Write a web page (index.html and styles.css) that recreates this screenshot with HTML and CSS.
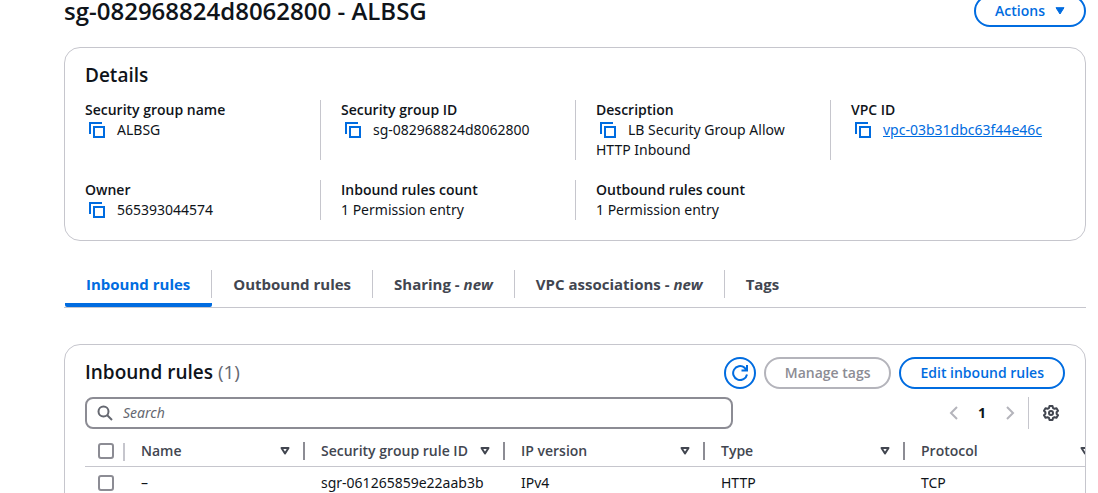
FILE: index.html
```html
<!DOCTYPE html>
<html lang="en">
<head>
<meta charset="utf-8">
<title>sg-082968824d8062800 - ALBSG</title>
<link rel="stylesheet" href="styles.css">
</head>
<body>
<svg class="sprite" aria-hidden="true">
  <symbol id="copy" viewBox="0 0 16 16"><path d="M1 12V1h12M5 5h10v10H5z" fill="none" stroke="currentColor" stroke-width="2"/></symbol>
  <symbol id="sort" viewBox="0 0 10 8"><path d="M1.5 1h7L5 6.500z" fill="none" stroke="currentColor" stroke-width="2" stroke-linejoin="round"/></symbol>
</svg>
<main class="page">
  <header class="page-header">
    <h1 class="page-title">sg-082968824d8062800 - ALBSG</h1>
    <button class="button" type="button">Actions
      <svg class="caret" viewBox="0 0 10 8" aria-hidden="true"><path d="M1 .7h8L5 7z" fill="currentColor" stroke="currentColor" stroke-linejoin="round"/></svg>
    </button>
  </header>

  <section class="card details">
    <h2 class="card-title">Details</h2>
    <dl class="fields">
      <div class="field"><dt>Security group name</dt><dd><button class="copy" type="button" aria-label="Copy name"><svg><use href="#copy"/></svg></button>ALBSG</dd></div>
      <div class="field"><dt>Security group ID</dt><dd><button class="copy" type="button" aria-label="Copy ID"><svg><use href="#copy"/></svg></button>sg-082968824d8062800</dd></div>
      <div class="field"><dt>Description</dt><dd><button class="copy" type="button" aria-label="Copy description"><svg><use href="#copy"/></svg></button>LB Security Group Allow HTTP Inbound</dd></div>
      <div class="field"><dt>VPC ID</dt><dd><button class="copy" type="button" aria-label="Copy VPC ID"><svg><use href="#copy"/></svg></button><a href="#vpc">vpc-03b31dbc63f44e46c</a></dd></div>
      <div class="field"><dt>Owner</dt><dd><button class="copy" type="button" aria-label="Copy owner"><svg><use href="#copy"/></svg></button>565393044574</dd></div>
      <div class="field"><dt>Inbound rules count</dt><dd>1 Permission entry</dd></div>
      <div class="field"><dt>Outbound rules count</dt><dd>1 Permission entry</dd></div>
    </dl>
  </section>

  <div class="tabs" role="tablist">
    <button class="tab tab-active" type="button" role="tab" aria-selected="true"><span>Inbound rules</span></button>
    <button class="tab" type="button" role="tab"><span>Outbound rules</span></button>
    <button class="tab" type="button" role="tab"><span>Sharing - <em>new</em></span></button>
    <button class="tab" type="button" role="tab"><span>VPC associations - <em>new</em></span></button>
    <button class="tab" type="button" role="tab"><span>Tags</span></button>
  </div>

  <section class="card rules">
    <div class="rules-header">
      <h2 class="card-title">Inbound rules <span class="count">(1)</span></h2>
      <div class="actions">
        <button class="button button-round" type="button" aria-label="Refresh">
          <svg viewBox="0 0 16 16" aria-hidden="true"><path d="M15 9.500A7 7 0 1 1 12.500 2.600L14.500 5M15 0v5.500H9.500" fill="none" stroke="currentColor" stroke-width="2"/></svg>
        </button>
        <button class="button" type="button" disabled>Manage tags</button>
        <button class="button" type="button">Edit inbound rules</button>
      </div>
    </div>
    <div class="toolbar">
      <label class="search">
        <svg viewBox="0 0 16 16" aria-hidden="true"><circle cx="6.5" cy="6.5" r="5" fill="none" stroke="currentColor" stroke-width="2"/><path d="M10 10l5 5" stroke="currentColor" stroke-width="2"/></svg>
        <input type="search" placeholder="Search" aria-label="Search rules">
      </label>
      <div class="paging">
        <nav class="pages" aria-label="Pages">
          <button class="page-button arrow" type="button" disabled aria-label="Previous page"><svg viewBox="0 0 16 16"><path d="M11 2L5 8l6 6" fill="none" stroke="currentColor" stroke-width="2"/></svg></button>
          <button class="page-button current" type="button">1</button>
          <button class="page-button arrow" type="button" disabled aria-label="Next page"><svg viewBox="0 0 16 16"><path d="M5 2l6 6-6 6" fill="none" stroke="currentColor" stroke-width="2"/></svg></button>
        </nav>
        <button class="settings" type="button" aria-label="Preferences">
          <svg viewBox="0 0 16 16" aria-hidden="true"><path d="M6.500 1h3l.5 2 1.500.8 2-.6L15 5.700 13.600 7.200v1.600L15 10.300l-1.500 2.500-2-.6-1.500.8-.5 2h-3L6 13l-1.500-.8-2 .6L1 10.300l1.400-1.500V7.200L1 5.700l1.500-2.500 2 .6L6 3z" fill="none" stroke="currentColor" stroke-width="2" stroke-linejoin="round"/><circle cx="8" cy="8" r="2" fill="none" stroke="currentColor" stroke-width="2"/></svg>
        </button>
      </div>
    </div>
    <div class="table-scroll">
      <table class="table">
        <colgroup><col class="col-select"><col class="col-name"><col><col><col><col></colgroup>
        <thead>
          <tr>
            <th><input type="checkbox" aria-label="Select all rules"></th>
            <th><div class="heading">Name<svg><use href="#sort"/></svg></div></th>
            <th><div class="heading">Security group rule ID<svg><use href="#sort"/></svg></div></th>
            <th><div class="heading">IP version<svg><use href="#sort"/></svg></div></th>
            <th><div class="heading">Type<svg><use href="#sort"/></svg></div></th>
            <th><div class="heading">Protocol<svg><use href="#sort"/></svg></div></th>
          </tr>
        </thead>
        <tbody>
          <tr>
            <td><input type="checkbox" aria-label="Select rule"></td>
            <td>–</td>
            <td>sgr-061265859e22aab3b</td>
            <td>IPv4</td>
            <td>HTTP</td>
            <td>TCP</td>
          </tr>
        </tbody>
      </table>
    </div>
  </section>
</main>
</body>
</html>
```
FILE: styles.css
```css
* { box-sizing: border-box; }

body {
  margin: 0;
  height: 100vh;
  overflow: hidden;
  background: #fff;
  color: #0f141a;
  font: 14px/20px "Noto Sans", "Open Sans", sans-serif;
}

button, input { font: inherit; color: inherit; }
button { padding: 0; border: 0; background: none; }
h1, h2, dl, dd { margin: 0; }
h1, h2, dt, th, .button, .tab { font-family: "Open Sans", "Noto Sans", sans-serif; }

.sprite { position: absolute; width: 0; height: 0; }

.page { padding: 0 12px 0 64px; }

.page-header {
  display: flex;
  justify-content: space-between;
  align-items: center;
  margin: -5px 0 20px;
}
.page-title { font-size: 24px; line-height: 30px; font-weight: 600; }

.button {
  display: flex;
  align-items: center;
  justify-content: center;
  gap: 10px;
  height: 32px;
  padding: 0 19px;
  border: 2px solid #006ce0;
  border-radius: 20px;
  color: #006ce0;
  font-weight: 600;
  white-space: nowrap;
}
.button:disabled { border-color: #b4b4bb; color: #8c8c94; }
.button-round { width: 32px; padding: 0; }
.button-round svg { width: 16px; height: 16px; }
.caret { width: 10px; height: 8px; }

.card { border: 1px solid #c6c6cd; border-radius: 16px; }
.card-title { font-size: 19px; line-height: 24px; font-weight: 600; }

.details { padding: 15px 0 20px; }
.details .card-title { padding: 0 20px; }

.fields {
  display: grid;
  grid-template-columns: repeat(4, 1fr);
  row-gap: 20px;
  margin-top: 13px;
}
.field { padding: 0 20px; border-left: 1px solid #c6c6cd; }
.field:nth-child(4n + 1) { border-left-color: transparent; padding-left: 19px; }
.field dt { font-weight: 600; }

.copy { width: 16px; height: 16px; margin: 0 12px 0 4px; vertical-align: -3px; color: #006ce0; }
.copy svg { display: block; width: 16px; height: 16px; }
.field a { color: #006ce0; }

.tabs {
  display: flex;
  margin-top: 25px;
  border-bottom: 1px solid #c6c6cd;
}
.tab {
  padding: 4px 0 5px;
  border-bottom: 4px solid transparent;
  color: #424650;
  font-size: 15px;
  font-weight: 700;
}
.tab span { display: block; padding: 4px 21px; border-right: 1px solid #c6c6cd; }
.tab:last-child span { border-right: 0; }
.tab-active {
  margin-left: 1px;
  border-radius: 2px;
  color: #006ce0;
  background: linear-gradient(#006ce0, #006ce0) bottom / 100% 4px no-repeat border-box;
}

.rules { margin-top: 36px; padding: 12px 0 20px; }
.rules-header, .toolbar {
  display: flex;
  justify-content: space-between;
  align-items: center;
  padding: 0 20px;
}
.rules-header { align-items: flex-start; }
.rules-header .card-title { padding-top: 3px; }
.count { color: #656871; font-weight: 400; }
.actions { display: flex; gap: 8px; }

.toolbar { margin-top: 8px; }
.search {
  display: flex;
  align-items: center;
  flex: 0 1 648px;
  gap: 10px;
  height: 32px;
  padding: 0 10px;
  border: 2px solid #8c8c94;
  border-radius: 8px;
  color: #656871;
}
.search svg { width: 16px; height: 16px; }
.search input { flex: 1; min-width: 0; padding: 0; border: 0; outline: 0; background: none; }
.search input::placeholder { color: #656871; font-style: italic; opacity: 1; }

.paging, .pages { display: flex; align-items: center; }
.page-button { display: flex; justify-content: center; align-items: center; width: 28px; height: 32px; }
.page-button svg { width: 16px; height: 16px; }
.arrow { color: #b4b4bb; }
.current { font-weight: 700; }
.settings { display: flex; align-items: center; height: 32px; margin-left: 4px; padding: 0 6px 0 14px; border-left: 1px solid #c6c6cd; color: #424650; }
.settings svg { width: 16px; height: 16px; }

.table-scroll { margin: 8px 0 0 20px; overflow: hidden; }
.table { width: 1020px; table-layout: fixed; border-collapse: collapse; }
.col-select { width: 40px; }
.col-name { width: 180px; }
.table th, .table td { padding: 0 0 0 16px; text-align: left; white-space: nowrap; }
.table th:first-child, .table td:first-child { padding-left: 13px; }
.table th { height: 29px; border-bottom: 1px solid #c6c6cd; color: #424650; font-weight: 600; }
.table td { height: 34px; }
.table input {
  display: block;
  appearance: none;
  width: 16px;
  height: 16px;
  margin: 0;
  border: 2px solid #8c8c94;
  border-radius: 3px;
}
.table th:first-child { background: linear-gradient(#c6c6cd, #c6c6cd) right 6px / 2px 18px no-repeat; }
.heading { display: flex; align-items: center; justify-content: space-between; padding-right: 13px; border-right: 2px solid #8c8c94; line-height: 18px; }
.heading svg { width: 10px; height: 8px; }
```
